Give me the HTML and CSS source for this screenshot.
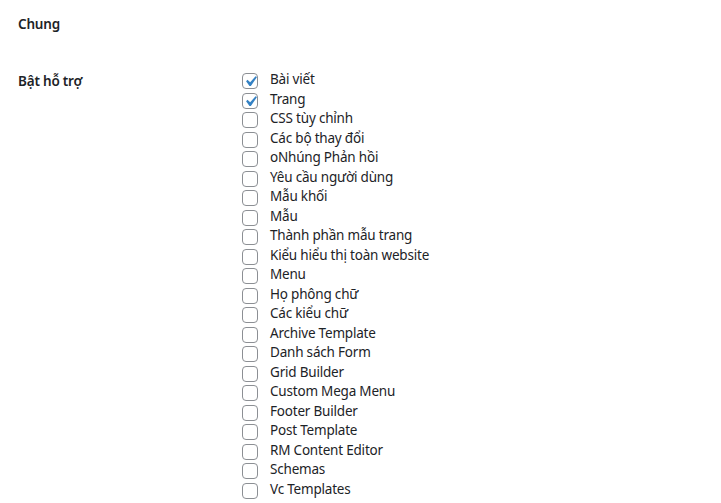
FILE: index.html
```html
<!DOCTYPE html>
<html lang="vi">
<head>
<meta charset="utf-8">
<link rel="stylesheet" href="styles.css">
</head>
<body>
<div class="page">
  <h2 class="title">Chung</h2>
  <div class="row">
    <div class="th">Bật hỗ trợ</div>
    <div class="td">
      <label class="opt"><span class="box checked"><svg viewBox="0 0 20 20"><path d="M14.83 4.89l1.34.94-5.81 8.38H9.02L5.78 9.67l1.34-1.25 2.57 2.4z"/></svg></span>Bài viết</label>
      <label class="opt"><span class="box checked"><svg viewBox="0 0 20 20"><path d="M14.83 4.89l1.34.94-5.81 8.38H9.02L5.78 9.67l1.34-1.25 2.57 2.4z"/></svg></span>Trang</label>
      <label class="opt"><span class="box"></span>CSS tùy chỉnh</label>
      <label class="opt"><span class="box"></span>Các bộ thay đổi</label>
      <label class="opt"><span class="box"></span>oNhúng Phản hồi</label>
      <label class="opt"><span class="box"></span>Yêu cầu người dùng</label>
      <label class="opt"><span class="box"></span>Mẫu khối</label>
      <label class="opt"><span class="box"></span>Mẫu</label>
      <label class="opt"><span class="box"></span>Thành phần mẫu trang</label>
      <label class="opt"><span class="box"></span>Kiểu hiểu thị toàn website</label>
      <label class="opt"><span class="box"></span>Menu</label>
      <label class="opt"><span class="box"></span>Họ phông chữ</label>
      <label class="opt"><span class="box"></span>Các kiểu chữ</label>
      <label class="opt"><span class="box"></span>Archive Template</label>
      <label class="opt"><span class="box"></span>Danh sách Form</label>
      <label class="opt"><span class="box"></span>Grid Builder</label>
      <label class="opt"><span class="box"></span>Custom Mega Menu</label>
      <label class="opt"><span class="box"></span>Footer Builder</label>
      <label class="opt"><span class="box"></span>Post Template</label>
      <label class="opt"><span class="box"></span>RM Content Editor</label>
      <label class="opt"><span class="box"></span>Schemas</label>
      <label class="opt"><span class="box"></span>Vc Templates</label>
    </div>
  </div>
</div>
</body>
</html>
```
FILE: styles.css
```css
html, body {
  margin: 0;
  padding: 0;
  background: #ffffff;
}
body {
  font-family: "Noto Sans", "Open Sans", sans-serif;
  font-size: 13.5px;
  letter-spacing: -0.2px;
  color: #1d2327;
}
.page {
  padding: 14px 18px 0 18px;
}
.title {
  margin: 0;
  font-size: 13.5px;
  font-weight: 600;
  line-height: 20px;
  height: 20px;
}
.row {
  display: grid;
  grid-template-columns: 224px 1fr;
  margin-top: 36px;
}
.th {
  font-weight: 600;
  line-height: 19.5px;
  padding-top: 2px;
}
.td {
  display: flex;
  flex-direction: column;
}
.opt {
  display: flex;
  align-items: center;
  line-height: 19.5px;
  height: 19.5px;
}
.box {
  box-sizing: border-box;
  width: 16px;
  height: 16px;
  border: 1px solid #8c8f94;
  border-radius: 4px;
  background: #fff;
  margin-right: 12px;
  margin-top: 3px;
  position: relative;
  flex: none;
}
.box svg {
  position: absolute;
  left: -3px;
  top: -3px;
  width: 21px;
  height: 21px;
  fill: #3582c4;
}
```
